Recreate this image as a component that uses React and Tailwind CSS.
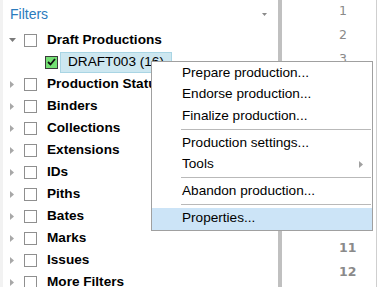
const filters = [
  "Production Status",
  "Binders",
  "Collections",
  "Extensions",
  "IDs",
  "Piths",
  "Bates",
  "Marks",
  "Issues",
  "More Filters",
];

function RightArrow({ className }) {
  return (
    <svg width="4" height="7" viewBox="0 0 4 7" className={className}>
      <path d="M0 0 L4 3.5 L0 7 Z" fill="currentColor" />
    </svg>
  );
}

function DownArrow({ className, w = 7, h = 4 }) {
  return (
    <svg width={w} height={h} viewBox="0 0 7 4" className={className}>
      <path d="M0 0 L7 0 L3.5 4 Z" fill="currentColor" />
    </svg>
  );
}

function Box() {
  return <span className="w-[13px] h-[13px] border border-[#8f8f8f] bg-white shrink-0" />;
}

function TreeRow({ label, open }) {
  return (
    <div className="flex items-center h-[22px] pl-[6px]">
      <span className="w-[15px] flex items-center">
        {open ? (
          <DownArrow className="text-[#7a7a7a]" />
        ) : (
          <RightArrow className="text-[#a8a8a8] ml-[1px]" />
        )}
      </span>
      <Box />
      <span className="ml-[10px] font-bold text-[13.6px] text-black whitespace-nowrap">{label}</span>
    </div>
  );
}

function MenuItem({ children, arrow }) {
  return (
    <div className="h-[21.5px] flex items-center pl-[30px] pr-[9px] text-[13.6px] text-black">
      <span className="flex-1">{children}</span>
      {arrow ? <RightArrow className="text-[#a0a0a0]" /> : null}
    </div>
  );
}

function Sep() {
  return (
    <div className="h-[5.5px] flex items-center ml-[29px] mr-[1px]">
      <div className="h-px w-full bg-[#b9b9b9]" />
    </div>
  );
}

export default function App() {
  const nums = [1, 2, 3, 4, 5, 6, 7, 8, 9, 10, 11, 12];
  return (
    <div className="relative w-[379px] h-[287px] overflow-hidden bg-white flex font-['Liberation_Sans',Arial,sans-serif]">
      <div className="w-[3px] bg-[#f2f2f2] shrink-0" />
      <div className="w-[275px] shrink-0">
        <div className="h-[29px] flex items-center justify-between pl-[7px] pr-[11px]">
          <span className="text-[14px] text-[#2b7bbd]">Filters</span>
          <DownArrow className="text-[#8a8a8a]" w={5} h={3} />
        </div>
        <TreeRow label="Draft Productions" open />
        <div className="flex items-center h-[22px] pl-[42px]">
          <span className="w-[13px] h-[13px] border border-[#3a3a3a] bg-[#74e074] flex items-center justify-center shrink-0">
            <svg width="9" height="8" viewBox="0 0 9 8">
              <path d="M1 4 L3.5 6.5 L8 1" fill="none" stroke="#111" strokeWidth="1.8" />
            </svg>
          </span>
          <span className="ml-[2px] h-[21px] flex items-center px-[7px] border border-[#a9d5e4] bg-[#cde7f0] text-[13.6px] text-black whitespace-nowrap">
            DRAFT003 (16)
          </span>
        </div>
        {filters.map((f) => (
          <TreeRow key={f} label={f} />
        ))}
      </div>
      <div className="w-[4px] bg-[#c0c0c0] shrink-0" />
      <div className="w-[95px] shrink-0 border-r border-[#cfcfcf] pl-[57px] font-['DejaVu_Sans',sans-serif] text-[#8a8a8a] text-[12.5px]">
        {nums.map((n) => (
          <div key={n} className={"h-[23.7px] flex items-center " + (n > 10 ? "font-bold" : "")}>
            {n}
          </div>
        ))}
      </div>
      <div className="flex-1" />

      <div className="absolute left-[151px] top-[61px] w-[222px] border border-[#a0a0a0] bg-white pb-[0.5px]">
        <MenuItem>Prepare production...</MenuItem>
        <MenuItem>Endorse production...</MenuItem>
        <MenuItem>Finalize production...</MenuItem>
        <Sep />
        <MenuItem>Production settings...</MenuItem>
        <MenuItem arrow>Tools</MenuItem>
        <Sep />
        <MenuItem>Abandon production...</MenuItem>
        <Sep />
        <div className="h-[22px] flex items-center pl-[30px] text-[13.6px] text-black bg-[#cce4f7]">Properties...</div>
      </div>
    </div>
  );
}
